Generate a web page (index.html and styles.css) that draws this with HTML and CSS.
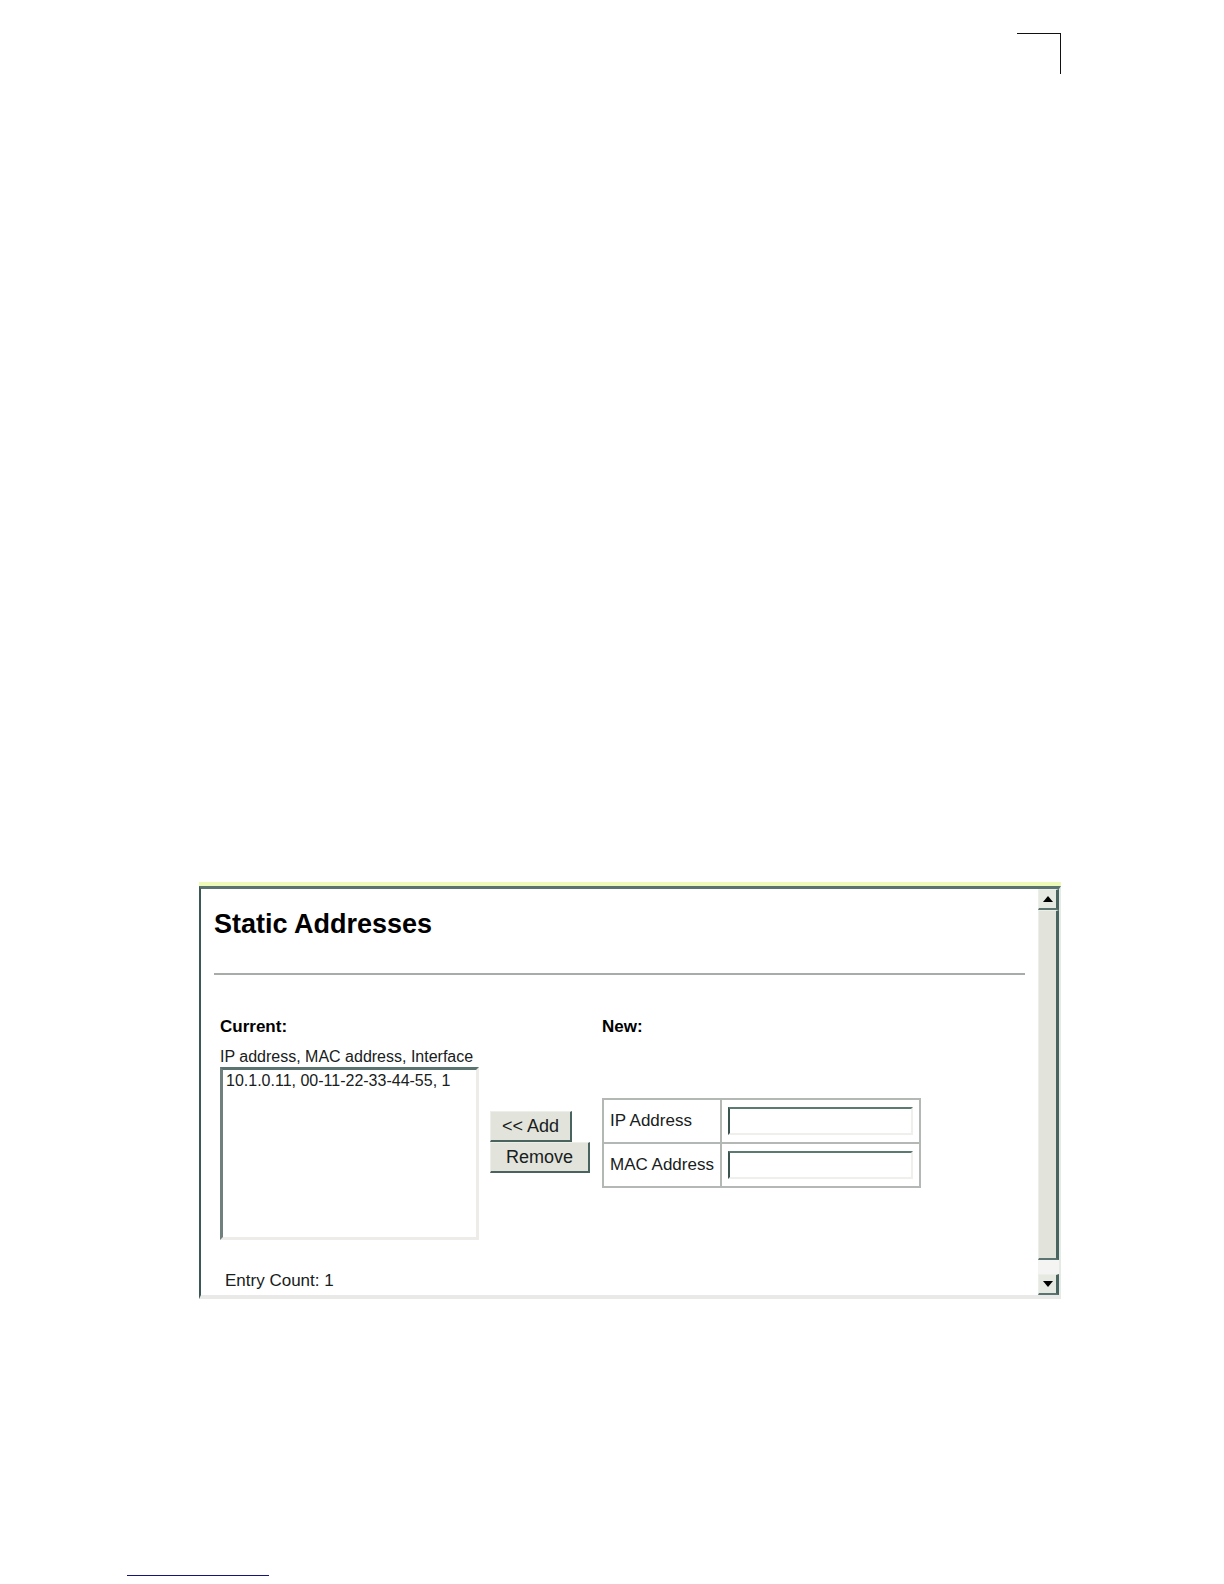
FILE: index.html
```html
<!DOCTYPE html>
<html lang="en">
<head>
  <meta charset="UTF-8">
  <meta name="viewport" content="width=device-width, initial-scale=1.0">
  <title>Static Addresses</title>
  <link rel="stylesheet" href="styles.css">
</head>
<body>

<div class="page-header">
  <div class="corner"></div>
</div>

<div class="frame">
  <div class="content">
    <h1>Static Addresses</h1>
    <hr>

    <form class="address-form">
      <div class="current">
        <h2>Current:</h2>
        <label class="list-label" for="addressList">IP address, MAC address, Interface</label>
        <select class="address-list" id="addressList" name="addressList" size="8">
          <option>10.1.0.11, 00-11-22-33-44-55, 1</option>
        </select>
      </div>

      <div class="actions">
        <button type="button" class="btn">&lt;&lt; Add</button>
        <button type="button" class="btn btn-remove">Remove</button>
      </div>

      <div class="new">
        <h2>New:</h2>
        <table class="new-table">
          <tr>
            <td><label for="ipAddress">IP Address</label></td>
            <td><input type="text" id="ipAddress" name="ipAddress"></td>
          </tr>
          <tr>
            <td><label for="macAddress">MAC Address</label></td>
            <td><input type="text" id="macAddress" name="macAddress"></td>
          </tr>
        </table>
      </div>
    </form>

    <p class="entry-count">Entry Count: 1</p>
  </div>

  <!-- Scrollbar -->
  <div class="scrollbar">
    <button type="button" class="scroll-btn" aria-label="Scroll up">
      <svg width="10" height="6" viewBox="0 0 10 6"><path d="M5 0L10 6H0Z"/></svg>
    </button>
    <div class="thumb"></div>
    <button type="button" class="scroll-btn" aria-label="Scroll down">
      <svg width="10" height="6" viewBox="0 0 10 6"><path d="M0 0H10L5 6Z"/></svg>
    </button>
  </div>
</div>

<div class="page-footer">
  <div class="footer-line"></div>
</div>

</body>
</html>
```

FILE: styles.css
```css
* { box-sizing: border-box; }
body {
  margin: 0;
  background: #fff;
  color: #182020;
  font-family: "Liberation Sans", Arial, sans-serif;
  font-size: 17px;
  line-height: 20px;
}
.page-header { display: flex; justify-content: flex-end; padding: 33px 163px 0 198px; }
.corner { width: 44px; height: 41px; border-top: 1px solid #111; border-right: 1px solid #111; }

/* Browser frame */
.frame {
  display: flex;
  margin: 812px 163px 0 199px;
  border-style: solid;
  border-width: 3px 2px 4px;
  border-color: #5c7470 #e4ebe6 #e9e9e7 #3c5854;
  box-shadow: 0 -4px 0 #eefbb8;
}
.content { flex: 1; padding: 13px 13px 4px 13px; }
h1 { margin: 0; color: #000; font-size: 27px; line-height: 44px; }
hr { height: 2px; margin: 27px 0 42px; border: none; background: #a8aca8; }
h2 { margin: 0; color: #000; font-size: 17px; line-height: 20px; }

.address-form { display: flex; padding-left: 6px; }
.list-label { display: block; margin-top: 10px; font-size: 16px; line-height: 20px; }
.address-list {
  display: block;
  width: 259px;
  height: 173px;
  padding: 2px 0 0;
  border-style: solid;
  border-width: 3px;
  border-color: #5c7470 #eeece8 #eeece8 #70807c;
  border-radius: 0;
  background: #fff;
  color: #182020;
  font-family: inherit;
  font-size: 16px;
  overflow: hidden;
  outline: none;
}
.address-list option { min-height: 20px; padding: 0 3px; line-height: 20px; }

.actions { display: flex; flex-direction: column; align-items: flex-start; width: 123px; padding: 94px 0 0 11px; }
.btn {
  height: 31px;
  padding: 0 11px;
  border-style: solid;
  border-width: 1px 2px 2px 1px;
  border-color: #eceee8 #49645f #49645f #eceee8;
  background: #e2e4dc;
  color: #182020;
  font-family: inherit;
  font-size: 18px;
  line-height: 20px;
}
.btn-remove { padding: 0 15px; }

.new-table { margin-top: 61px; border: 2px solid #b4b8b4; border-collapse: collapse; }
.new-table td { height: 44px; padding: 0 6px; border: 2px solid #b4b8b4; white-space: nowrap; }
.new-table input {
  display: block;
  width: 185px;
  height: 28px;
  padding: 0 4px;
  border-style: solid;
  border-width: 2px;
  border-color: #5c7a72 #efefec #efefec #3a5450;
  background: #fff;
  font: inherit;
  outline: none;
}
.entry-count { margin: 31px 0 0; padding-left: 11px; }

.scrollbar { display: flex; flex-direction: column; width: 21px; background: #f4f4f2; }
.scroll-btn {
  display: flex;
  justify-content: center;
  align-items: center;
  height: 21px;
  padding: 0;
  border-style: solid;
  border-width: 1px 3px 2px 1px;
  border-color: #eceee8 #49645f #5c7470 #eceee8;
  background: #e6e8e2;
}
.thumb {
  flex: 1;
  margin-bottom: 14px;
  border-style: solid;
  border-width: 1px 3px 2px 1px;
  border-color: #eceee8 #49645f #5c7470 #eceee8;
  background: #e2e4dc;
}

.page-footer { padding: 276px 127px 8px; }
.footer-line { width: 142px; height: 1px; background: #14147a; }
```
